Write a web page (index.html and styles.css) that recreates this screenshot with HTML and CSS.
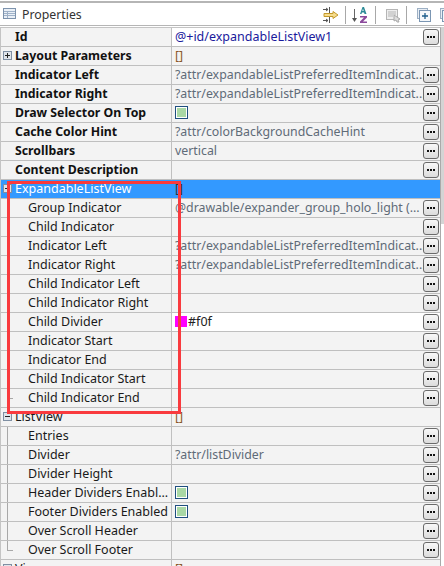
FILE: index.html
```html
<!DOCTYPE html>
<html lang="en">
<head>
<meta charset="utf-8">
<title>Properties</title>
<link rel="stylesheet" href="styles.css">
</head>
<body>
<div class="view">
  <header class="bar">
    <svg class="tab-icon" width="16" height="14" viewBox="0 0 16 14"><rect x="1.5" y="1.5" width="12" height="10" fill="#eaf0f7" stroke="#7d93ad"/><path d="M2 4.500h11M2 6.500h11M2 8.500h11M5.500 4v7" stroke="#9fb2c9"/></svg>
    <span class="title">Properties</span>
    <div class="tools">
      <svg width="16" height="18" viewBox="0 0 16 18"><path d="M0 3.500h5M0 14.500h5M6.500 1v6M6.500 11v6" stroke="#555" fill="none"/><path d="M3 2l2 1.500-2 1.500M3 13l2 1.500-2 1.500" stroke="#555" fill="none"/><path d="M1 7.500h9V5.500l5 3.500-5 3.500v-2H1z" fill="#f6dc8c" stroke="#c49a2c"/></svg>
      <i class="sep"></i>
      <svg class="az" width="18" height="18" viewBox="0 0 18 18"><path d="M3.500 3v10" stroke="#666"/><path d="M1 12h5l-2.500 4z" fill="#555"/><path d="M9 8l2.500-7h1.500l2.500 7h-2l-.4-1.500h-2.200l-.4 1.500zM11.300 5h1.400l-.7-2.300z" fill="#2a8a96"/><path d="M9 10h7v1.500l-4 4h4V17H9v-1.500l4-4H9z" fill="#8c4a9c"/></svg>
      <i class="sep"></i>
      <svg class="filter" width="16" height="16" viewBox="0 0 16 16"><rect x="1.500" y="2.500" width="11" height="10" fill="#eee" stroke="#b5b5b5"/><path d="M3 5h8M3 7h8M3 9h5" stroke="#b5b5b5"/><path d="M9 8l6 4-2 1 1 2-2 0-1-2-2 1z" fill="#ddd" stroke="#aaa"/></svg>
      <i class="sep near"></i>
      <svg class="expand" width="14" height="14" viewBox="0 0 14 14"><rect x="0.500" y="0.500" width="10" height="10" fill="#e8eef5" stroke="#9db0c4"/><rect x="2.500" y="2.500" width="11" height="11" fill="#f5f8fb" stroke="#7b96b3"/><path d="M8 5v6M5 8h6" stroke="#1c5c8c" stroke-width="1.300"/></svg>
      <svg class="cut" width="4" height="14" viewBox="0 0 4 14"><rect x="0.500" y="0.500" width="10" height="10" fill="#e8eef5" stroke="#9db0c4"/><rect x="2.500" y="2.500" width="11" height="11" fill="#f5f8fb" stroke="#7b96b3"/></svg>
    </div>
  </header>

  <div class="main">
  <div class="table">
    <div class="row"><div class="name bold">Id</div><div class="val white id">@+id/expandableListView1<b class="btn"></b></div></div>
    <div class="row"><div class="name bold"><i class="exp plus"></i>Layout Parameters</div><div class="val"><span class="br">[]</span></div></div>
    <div class="row"><div class="name bold">Indicator Left</div><div class="val attr">?attr/expandableListPreferredItemIndicat...<b class="btn"></b></div></div>
    <div class="row"><div class="name bold">Indicator Right</div><div class="val attr">?attr/expandableListPreferredItemIndicat...<b class="btn"></b></div></div>
    <div class="row"><div class="name bold">Draw Selector On Top</div><div class="val"><i class="check"></i><b class="btn"></b></div></div>
    <div class="row"><div class="name bold">Cache Color Hint</div><div class="val attr">?attr/colorBackgroundCacheHint<b class="btn"></b></div></div>
    <div class="row"><div class="name bold">Scrollbars</div><div class="val attr">vertical<b class="btn"></b></div></div>
    <div class="row"><div class="name bold">Content Description</div><div class="val"><b class="btn"></b></div></div>

    <div class="row sel"><div class="name group"><i class="exp minus"></i>ExpandableListView</div><div class="val"><span class="br">[]</span></div></div>
    <div class="row"><div class="name sub">Group Indicator</div><div class="val attr">@drawable/expander_group_holo_light (...<b class="btn"></b></div></div>
    <div class="row"><div class="name sub">Child Indicator</div><div class="val"><b class="btn"></b></div></div>
    <div class="row"><div class="name sub">Indicator Left</div><div class="val attr">?attr/expandableListPreferredItemIndicat...<b class="btn"></b></div></div>
    <div class="row"><div class="name sub">Indicator Right</div><div class="val attr">?attr/expandableListPreferredItemIndicat...<b class="btn"></b></div></div>
    <div class="row"><div class="name sub">Child Indicator Left</div><div class="val"><b class="btn"></b></div></div>
    <div class="row"><div class="name sub">Child Indicator Right</div><div class="val"><b class="btn"></b></div></div>
    <div class="row"><div class="name sub">Child Divider</div><div class="val white dark"><i class="swatch"></i>#f0f<b class="btn"></b></div></div>
    <div class="row"><div class="name sub">Indicator Start</div><div class="val"><b class="btn"></b></div></div>
    <div class="row"><div class="name sub">Indicator End</div><div class="val"><b class="btn"></b></div></div>
    <div class="row"><div class="name sub">Child Indicator Start</div><div class="val"><b class="btn"></b></div></div>
    <div class="row"><div class="name sub last">Child Indicator End</div><div class="val"><b class="btn"></b></div></div>

    <div class="row"><div class="name group"><i class="exp minus"></i>ListView</div><div class="val"><span class="br">[]</span></div></div>
    <div class="row"><div class="name sub">Entries</div><div class="val"><b class="btn"></b></div></div>
    <div class="row"><div class="name sub">Divider</div><div class="val attr">?attr/listDivider<b class="btn"></b></div></div>
    <div class="row"><div class="name sub">Divider Height</div><div class="val"><b class="btn"></b></div></div>
    <div class="row"><div class="name sub">Header Dividers Enabl...</div><div class="val"><i class="check"></i><b class="btn"></b></div></div>
    <div class="row"><div class="name sub">Footer Dividers Enabled</div><div class="val"><i class="check"></i><b class="btn"></b></div></div>
    <div class="row"><div class="name sub">Over Scroll Header</div><div class="val"><b class="btn"></b></div></div>
    <div class="row"><div class="name sub last">Over Scroll Footer</div><div class="val"><b class="btn"></b></div></div>
    <div class="row"><div class="name group"><i class="exp plus"></i>View</div><div class="val"><span class="br">[]</span></div></div>
  </div>
  <div class="scroll"><div class="thumb"></div></div>
  </div>
  <div class="mark"></div>
</div>
</body>
</html>
```
FILE: styles.css
```css
* { box-sizing: border-box; }
html, body { margin: 0; padding: 0; height: 100%; overflow: hidden; background: #fff; }
body { font-family: "Noto Sans", "Liberation Sans", sans-serif; font-size: 12.500px; color: #1a1a1a; }
.view { position: relative; height: 566px; overflow: hidden; border-top: 2px solid #b5b5b5; margin-top: 1px; }
.bar { height: 23px; display: flex; align-items: center; padding-left: 2px; border-bottom: 1px solid #b5b5b5; background: #fff; }
.tab-icon { margin-right: 4px; }
.title { font-size: 12.300px; color: #333; }
.tools { margin-left: auto; display: flex; align-items: center; padding-top: 1px; }
.tools svg { display: block; }
.tools .sep { width: 1px; height: 18px; background: #a8a8a8; margin-left: 6px; }
.tools .sep.near { margin-left: 5px; }
.tools .az { margin-left: 5px; }
.tools .filter { margin-left: 9px; }
.tools .expand { margin-left: 10px; }
.tools .cut { margin-left: 9px; }
.main { display: flex; margin-top: 1px; align-items: flex-start; }
.table { flex: 1; min-width: 0; border-right: 1px solid #aaa; border-top: 1px solid #c4c4c4; border-left: 1px solid #c4c4c4; }
.scroll { width: 3px; flex: none; background: #f3f3f3; }
.thumb { height: 197px; background: #d4d4d4; }
.row { display: grid; grid-template-columns: 171px 1fr; height: 19px; background: #f3f3f3; border-bottom: 1px solid #bfbfbf; line-height: 18px; white-space: nowrap; }
.name { position: relative; border-right: 1px solid #c0c0c0; padding-left: 14px; overflow: hidden; }
.bold { font-weight: 700; color: #111; font-size: 12.300px; }
.group { padding-left: 14px; }
.sub { padding-left: 27px; }
.val { position: relative; padding: 0 17px 0 3px; overflow: hidden; }
.white { background: #fff; }
.id { color: #1a1a9c; }
.attr { color: #5f6b78; font-size: 12.350px; }
.dark { color: #222; }
.br { color: #8a5a2a; }
.sel { background: #3399ff; }
.sel .name { color: #fff; border-right-color: #3399ff; }
.sel .br { color: #333; }
.exp { position: absolute; left: 2px; top: 4px; width: 9px; height: 9px; border: 1px solid #7f8fa3; background: #dfe4ea; }
.exp::before { content: ""; position: absolute; left: 1px; top: 3px; width: 5px; height: 1px; background: #222; }
.exp.plus::after { content: ""; position: absolute; left: 3px; top: 1px; width: 1px; height: 5px; background: #222; }
.sub::before { content: ""; position: absolute; left: 6px; top: 0; bottom: -1px; width: 1px; background: #a8a8a8; }
.sub.last::before { bottom: 9px; }
.sub.last::after { content: ""; position: absolute; left: 6px; top: 9px; width: 6px; height: 1px; background: #a8a8a8; }
.check { display: block; width: 13px; height: 13px; margin-top: 2px; border: 1px solid #1f4f7f; background: #fff; box-shadow: inset 0 0 0 1px #fff, inset 0 0 0 6px #a9d8a5; }
.swatch { display: inline-block; width: 12px; height: 11px; background: #ff00ff; margin-right: 1px; vertical-align: -1px; }
.btn { position: absolute; right: 1px; top: 1px; width: 16px; height: 16px; border: 1px solid #6a6a6a; border-radius: 3px; background: linear-gradient(#f8f8f8, #dcdcdc); }
.btn::before { content: ""; position: absolute; left: 3px; top: 6px; width: 2px; height: 2px; background: #111; box-shadow: 3px 0 #111, 6px 0 #111; }
.mark { position: absolute; left: 7px; top: 178px; width: 174px; height: 233px; border: 3px solid #f93a3e; }
```
